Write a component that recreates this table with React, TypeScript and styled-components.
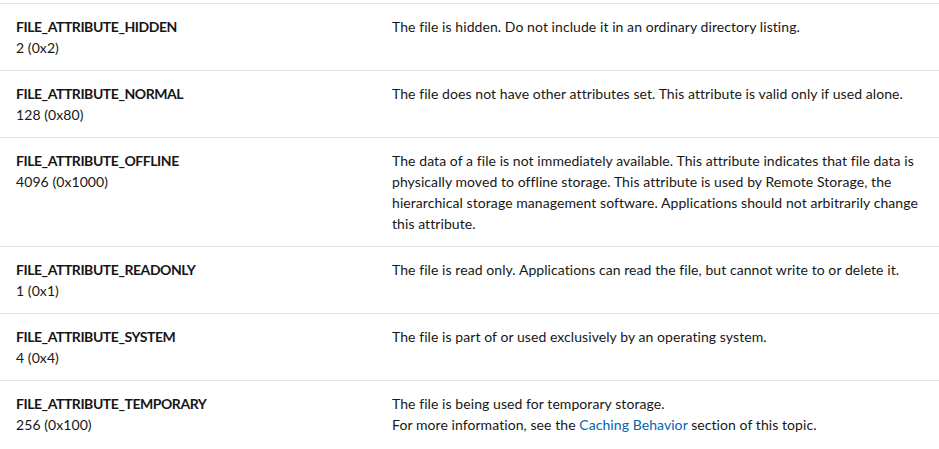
import React from "react";
import styled, { createGlobalStyle } from "styled-components";

const Global = createGlobalStyle`
  html, body { margin: 0; padding: 0; background: #ffffff; }
  body {
    font-family: "Segoe UI", "Lato", "Noto Sans", sans-serif;
    color: #171717;
    -webkit-font-smoothing: antialiased;
  }
`;

const Page = styled.div`
  padding-top: 3px;
  width: 939px;
`;

const Table = styled.div`
  display: grid;
  grid-template-columns: 376px 1fr;
  border-top: 1px solid #e3e3e3;
`;

const Row = styled.div`
  display: contents;
`;

const Cell = styled.div<{ $last?: boolean }>`
  padding: 12px 16px;
  border-bottom: ${(p) => (p.$last ? "none" : "1px solid #e3e3e3")};
  font-size: 14px;
  line-height: 21px;
  letter-spacing: 0.07px;
`;

const Name = styled.div`
  font-weight: 700;
  letter-spacing: -0.45px;
  color: #161616;
`;

const Value = styled.div``;

const Para = styled.p`
  margin: 0;
`;

const Link = styled.a`
  color: #0065b3;
  text-decoration: none;
`;

type Item = { name: string; value: string; desc: React.ReactNode[] };

const items: Item[] = [
  {
    name: "FILE_ATTRIBUTE_HIDDEN",
    value: "2 (0x2)",
    desc: ["The file is hidden. Do not include it in an ordinary directory listing."],
  },
  {
    name: "FILE_ATTRIBUTE_NORMAL",
    value: "128 (0x80)",
    desc: ["The file does not have other attributes set. This attribute is valid only if used alone."],
  },
  {
    name: "FILE_ATTRIBUTE_OFFLINE",
    value: "4096 (0x1000)",
    desc: [
      "The data of a file is not immediately available. This attribute indicates that file data is physically moved to offline storage. This attribute is used by Remote Storage, the hierarchical storage management software. Applications should not arbitrarily change this attribute.",
    ],
  },
  {
    name: "FILE_ATTRIBUTE_READONLY",
    value: "1 (0x1)",
    desc: ["The file is read only. Applications can read the file, but cannot write to or delete it."],
  },
  {
    name: "FILE_ATTRIBUTE_SYSTEM",
    value: "4 (0x4)",
    desc: ["The file is part of or used exclusively by an operating system."],
  },
  {
    name: "FILE_ATTRIBUTE_TEMPORARY",
    value: "256 (0x100)",
    desc: [
      "The file is being used for temporary storage.",
      <>
        For more information, see the <Link href="#">Caching Behavior</Link> section of this topic.
      </>,
    ],
  },
];

export default function App() {
  return (
    <Page>
      <Global />
      <Table>
        {items.map((it, idx) => {
          const last = idx === items.length - 1;
          return (
            <Row key={it.name}>
              <Cell $last={last}>
                <Name>{it.name}</Name>
                <Value>{it.value}</Value>
              </Cell>
              <Cell $last={last}>
                {it.desc.map((d, i) => (
                  <Para key={i}>{d}</Para>
                ))}
              </Cell>
            </Row>
          );
        })}
      </Table>
    </Page>
  );
}
